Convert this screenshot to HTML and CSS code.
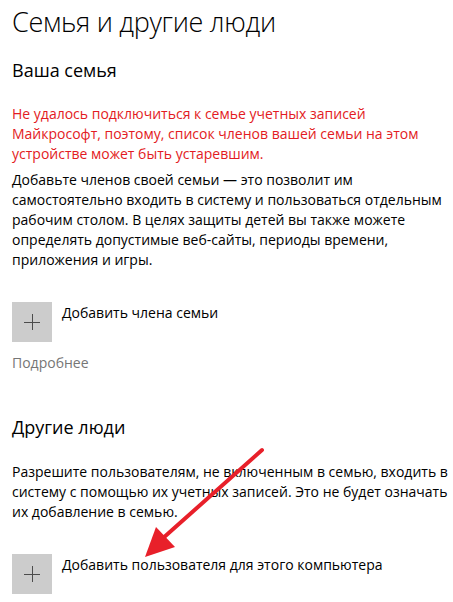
FILE: index.html
```html
<!DOCTYPE html>
<html lang="ru">
<head>
  <meta charset="UTF-8">
  <title>Семья и другие люди</title>
  <link rel="stylesheet" href="styles.css">
</head>
<body>
<div class="page">
  <h1>Семья и другие люди</h1>

  <h2>Ваша семья</h2>
  <p class="error">Не удалось подключиться к семье учетных записей<br>Майкрософт, поэтому, список членов вашей семьи на этом<br>устройстве может быть устаревшим.</p>
  <p class="text">Добавьте членов своей семьи — это позволит им<br>самостоятельно входить в систему и пользоваться отдельным<br>рабочим столом. В целях защиты детей вы также можете<br>определять допустимые веб-сайты, периоды времени,<br>приложения и игры.</p>
  <div class="add">
    <div class="plus"></div>
    <span>Добавить члена семьи</span>
  </div>
  <a class="more">Подробнее</a>

  <h2 class="other">Другие люди</h2>
  <p class="text">Разрешите пользователям, не включенным в семью, входить в<br>систему с помощью их учетных записей. Это не будет означать<br>их добавление в семью.</p>
  <div class="add">
    <div class="plus"></div>
    <span>Добавить пользователя для этого компьютера</span>
  </div>

  <svg class="arrow" width="140" height="120" viewBox="0 0 140 120">
    <line x1="130" y1="7" x2="30" y2="96" stroke="#e8202a" stroke-width="4" stroke-linecap="round"/>
    <polygon points="13,114 24,84 43,104" fill="#e8202a"/>
  </svg>
</div>
</body>
</html>
```

FILE: styles.css
```css
body {
  margin: 0;
  background: #fff;
  font-family: "Open Sans", "Noto Sans", sans-serif;
  color: #000;
}
.page {
  position: relative;
  padding: 0 12px;
  height: 602px;
  overflow: hidden;
}
h1 {
  font-size: 27px;
  font-weight: 300;
  letter-spacing: -0.3px;
  margin: 0;
  padding-top: 2px;
  line-height: 40px;
}
h2 {
  font-size: 18px;
  font-weight: 400;
  margin: 15px 0 0;
  line-height: 26px;
}
.other {
  margin-top: 42px;
}
p {
  font-size: 14px;
  line-height: 20px;
  margin: 0;
  white-space: nowrap;
}
.error {
  color: #e31b23;
  margin-top: 21px;
}
.text {
  margin-top: 6px;
}
.other + .text {
  margin-top: 22px;
}
.add {
  display: flex;
  align-items: flex-start;
  gap: 10px;
  margin-top: 32px;
  font-size: 14px;
}
.add span {
  padding-top: 1px;
}
.plus {
  width: 40px;
  height: 40px;
  background: #cccccc;
  position: relative;
  flex: none;
}
.plus::before,
.plus::after {
  content: "";
  position: absolute;
  background: #4c4c4c;
  left: 50%;
  top: 50%;
}
.plus::before {
  width: 16px;
  height: 1px;
  margin: 0 0 0 -8px;
}
.plus::after {
  width: 1px;
  height: 16px;
  margin: -8px 0 0 0;
}
.more {
  display: block;
  color: #767676;
  font-size: 14px;
  margin-top: 11px;
}
.arrow {
  position: absolute;
  left: 132px;
  top: 443px;
}
```
